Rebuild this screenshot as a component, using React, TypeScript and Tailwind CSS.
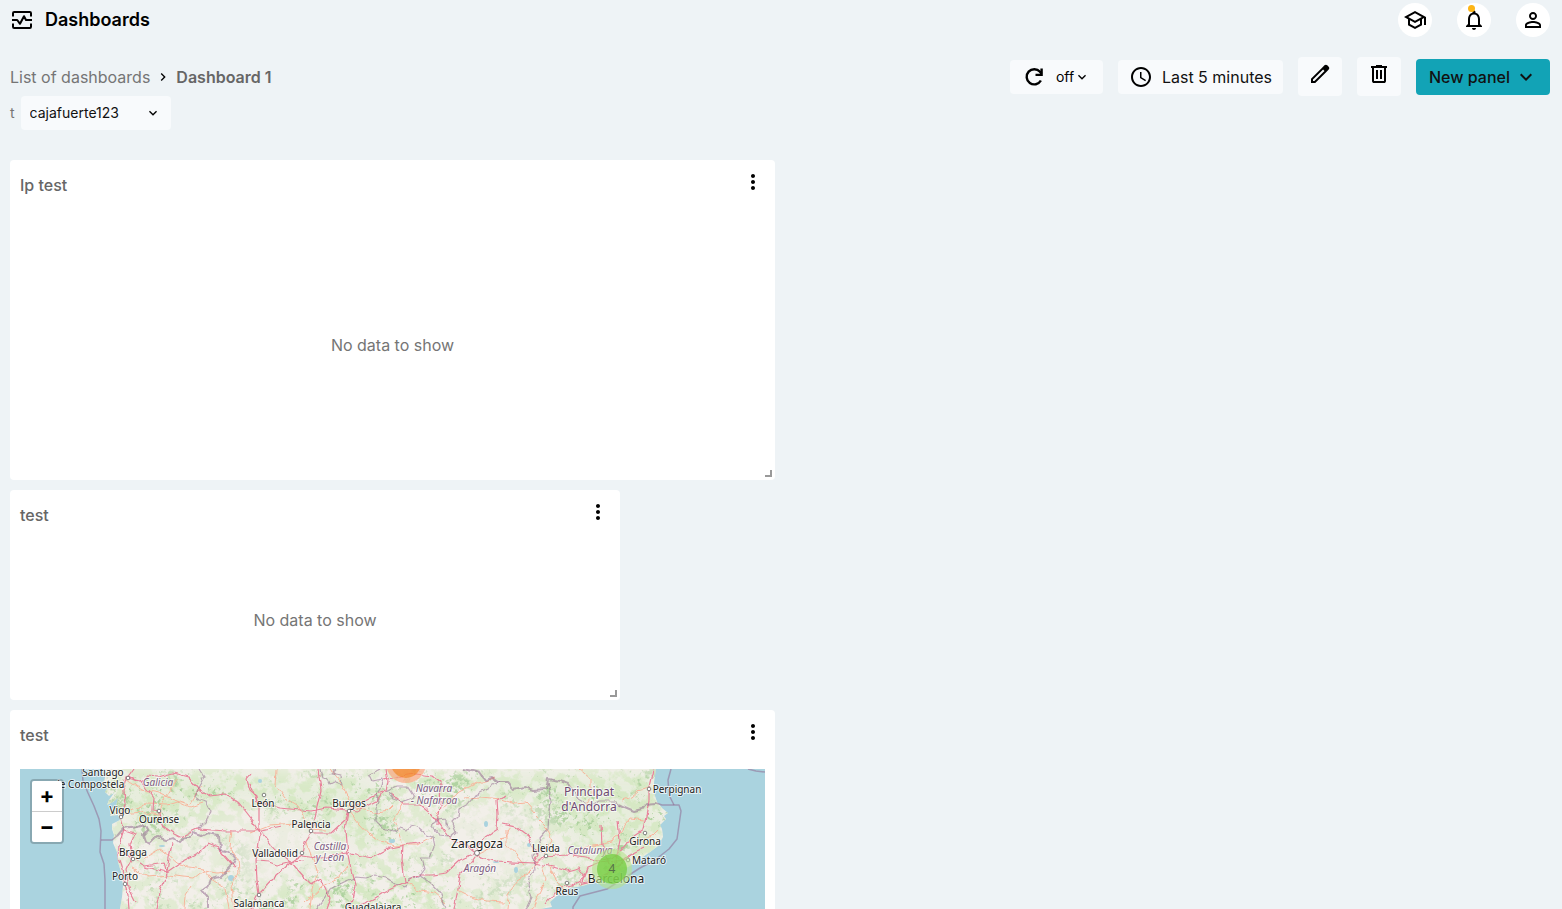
import React from "react";
import {
  MdChevronRight,
  MdKeyboardArrowDown,
  MdMoreVert,
  MdNotificationsNone,
  MdOutlineSchool,
  MdPersonOutline,
  MdSchedule,
} from "react-icons/md";

function ActivityIcon() {
  return (
    <svg className="size-6" viewBox="0 0 24 24" fill="none" stroke="currentColor" strokeWidth="2" aria-hidden="true">
      <path d="M3 8.500V5.200Q3 4 4.200 4H19.800Q21 4 21 5.200V8.500M3 15.500V18.800Q3 20 4.200 20H19.800Q21 20 21 18.800V15.500" />
      <path d="M2 12H7.200L10 15.800L14 8.200L16 12H22" strokeLinejoin="round" />
    </svg>
  );
}

function RefreshIcon() {
  return (
    <svg className="size-6" viewBox="0 0 24 24" fill="none" stroke="currentColor" strokeWidth="2.400" aria-hidden="true">
      <path d="M18.900 15.500A7.600 7.600 0 1 1 18 6.800L19.500 8.800" />
      <path d="M13.500 9.900H19.600V3.500" />
    </svg>
  );
}

function EditIcon() {
  return (
    <svg className="size-6" viewBox="0 0 24 24" fill="currentColor" aria-hidden="true">
      <path d="M5 19H6.400L16.500 8.900L15.100 7.500L5 17.600ZM15.050 4.725L16.450 3.325Q17.025 2.750 17.862 2.750T19.275 3.325L20.675 4.725Q21.250 5.300 21.275 6.112T20.725 7.500L17.850 10.400L7.250 21H3V16.750L13.600 6.150Z" fillRule="evenodd" />
    </svg>
  );
}

function TrashIcon() {
  return (
    <svg className="size-6" viewBox="0 0 24 24" fill="currentColor" aria-hidden="true">
      <path d="M7 21Q6.175 21 5.588 20.413T5 19V6H4V4H9V3H15V4H20V6H19V19Q19 19.825 18.413 20.413T17 21ZM17 6H7V19H17ZM9 17H11V8H9ZM13 17H15V8H13Z" />
    </svg>
  );
}

interface PanelProps {
  title: string;
  className: string;
  children: React.ReactNode;
}

function Panel({ title, className, children }: PanelProps) {
  return (
    <section className={"relative flex flex-col rounded bg-white p-2.5 " + className}>
      <div className="flex h-[49px] shrink-0 items-start justify-between">
        <h2 className="pt-[3px] text-base leading-6 font-medium text-[#666666]">{title}</h2>
        <button type="button" aria-label="Panel options" className="flex size-6 items-center justify-center text-black">
          <MdMoreVert className="size-6" />
        </button>
      </div>
      {children}
      <span className="absolute right-[3px] bottom-[3px] size-[7px] border-r-2 border-b-2 border-[#999999]" />
    </section>
  );
}

const majorRoads = [
  "M134 769L127 779L123 790L124 805L121 818L124 829L119 845L118 858L122 870L125 884L128 895L129 909",
  "M128 777L143 784L153 797L152 811L159 812L162 825L174 834L180 837L197 829L227 831L256 831L281 826",
  "M126 778L140 781L147 776L158 777L173 773L188 777L198 788L210 796L225 794L239 804L253 822L260 834L258 850L256 860L257 880L259 894",
  "M119 847L132 858L145 866L164 863L167 875L159 893L156 909",
  "M145 867L167 872L180 863L199 853L208 844L218 848L231 863L236 867",
  "M124 830L135 834L130 845L132 858L126 870L129 888L136 902",
  "M172 843L169 858L167 872",
  "M251 775L247 780L250 790L256 795L257 803L280 808L311 811L327 808L348 810L366 800L377 794L386 791L388 782L386 769",
  "M385 790L377 801L358 811L349 810L346 820L331 834L311 834L305 843L303 854L290 863L275 877L259 894L251 909",
  "M250 783L259 805L259 829L274 849L290 862L304 878L311 885L321 879L330 898L326 909",
  "M349 811L346 830L348 855L351 870L355 885L352 899L348 909",
  "M303 855L322 858L347 853L372 858L390 848L405 845L423 842",
  "M390 794L404 804L420 804L432 814L441 825L450 838L468 847L476 853L480 858L495 861L533 863L546 856L566 854L586 857L598 861L611 858L624 848L634 835L643 829L646 816L649 800L649 787L653 769",
  "M384 780L400 776L414 774L433 776L441 782L440 805L438 825",
  "M477 853L469 864L460 875L458 889L454 909",
  "M476 851L486 837L497 830L498 815L497 800L505 795",
  "M475 853L460 860L447 872L433 874L419 874L408 881L405 882L402 860L403 846",
  "M502 824L516 827L528 836L538 855L533 863L553 867L567 871L578 868L585 877L573 885L562 887L553 894L545 904",
  "M580 884L593 881L608 873L618 865L631 854L643 848",
  "M601 824L602 845L606 856L612 869",
  "M618 821L620 840L617 855L613 869",
  "M582 884L588 868L601 863L615 861L630 860",
  "M405 882L383 893L366 904L348 909",
  "M256 861L269 862L277 865L289 862L305 861",
  "M318 769L321 790L317 807L314 825L310 834",
];

const minorRoads = [
  "M127 780L142 790L160 793L177 801L190 807L202 803",
  "M130 810L147 804L168 805L181 801L190 804L198 790L202 785",
  "M124 814L142 812L158 815L164 801L176 780",
  "M131 868L148 877L169 875L183 877L194 878L203 871L218 873L230 871",
  "M144 858L160 849L169 855L177 862L189 867L203 869",
  "M191 885L185 895L184 909",
  "M202 869L211 879L225 888L229 909",
  "M250 833L270 825L293 823L310 829L325 830",
  "M277 769L276 786L286 799L298 806L308 825L311 834",
  "M350 812L359 824L370 836L381 842L394 846L404 845L417 845L432 837",
  "M393 805L387 811L377 813L360 809L343 804",
  "M404 803L395 818L397 828L401 840L404 847",
  "M330 769L341 782L348 798L353 810",
  "M437 813L459 792L477 783L496 778",
  "M465 798L481 797L501 799L515 804L526 803L536 814",
  "M506 829L506 844L516 855L524 865",
  "M538 860L528 874L517 881L508 895L507 909",
  "M458 890L474 898L488 901L503 902",
  "M306 842L312 857L317 870L312 890L310 909",
  "M351 862L338 878L322 887L305 903",
  "M536 817L547 828L552 841L544 852",
  "M573 857L583 847L599 844L611 841L619 835L630 818L644 820",
  "M627 843L641 839L652 835L658 829",
  "M542 866L546 879L539 894L532 909",
  "M550 867L555 880L565 890",
  "M579 769L591 779L591 796L585 806",
  "M649 788L640 790L632 797L623 800",
  "M231 830L229 846L238 859L239 873L231 887L234 909",
  "M407 882L419 891L434 893L446 903",
  "M476 855L493 847L503 838L511 827",
];

const regionBorders = [
  "M199 769L204 777L199 786L195 797L199 800L206 802L210 810L207 820L198 829",
  "M320 769L322 778L327 779L329 784L335 781L342 784L341 775L331 773L336 769",
  "M380 769L369 775L372 781L383 779L380 789L376 795L379 802L376 808L376 821L383 828L393 831L401 828L407 830L411 825L418 827L425 833L432 836L434 848L430 858L421 858L424 868L418 876L408 879L406 887L396 884L385 877L375 875L365 878L356 877L344 882L330 889L325 898L316 909",
  "M386 792L397 786L407 786L414 797L402 802L393 799L388 793",
  "M500 782L484 790L475 795L468 804L459 809L458 816L452 822L456 832L450 837L439 836L433 827L438 819L445 818L445 824L450 829",
  "M548 782L551 794L549 811L548 829L540 838L543 850L533 856L535 870L529 878L528 886L531 898L526 909",
  "M418 874L433 885L441 894L446 909",
  "M620 806L613 801L599 801L590 806L578 799L573 788",
];

const waterSpots = [
  [392, 841, 3, 2],
  [486, 824, 2, 3],
  [529, 845, 2, 2],
  [231, 878, 3, 3],
  [162, 846, 3, 1],
  [496, 862, 3, 1],
  [260, 781, 2, 2],
  [516, 870, 2, 3],
];

const towns: { name: string; x: number; y: number; dot: [number, number] | null }[] = [
  { name: "Santiago", x: 103, y: 776, dot: [128, 778] },
  { name: "de Compostela", x: 89, y: 788, dot: null },
  { name: "Vigo", x: 120, y: 814, dot: [121, 817] },
  { name: "Ourense", x: 159, y: 823, dot: [159, 811] },
  { name: "Braga", x: 133, y: 856, dot: [133, 859] },
  { name: "Porto", x: 125, y: 880, dot: [125, 884] },
  { name: "León", x: 263, y: 807, dot: [264, 795] },
  { name: "Burgos", x: 349, y: 807, dot: [349, 811] },
  { name: "Palencia", x: 311, y: 828, dot: [311, 831] },
  { name: "Valladolid", x: 275, y: 857, dot: [302, 853] },
  { name: "Salamanca", x: 259, y: 907, dot: [259, 895] },
  { name: "Guadalajara", x: 373, y: 911, dot: null },
  { name: "Lleida", x: 546, y: 852, dot: [546, 856] },
  { name: "Reus", x: 567, y: 895, dot: [567, 883] },
  { name: "Girona", x: 645, y: 845, dot: [645, 833] },
  { name: "Mataró", x: 649, y: 864, dot: [628, 860] },
  { name: "Perpignan", x: 677, y: 793, dot: [649, 789] },
];

const regions = [
  { name: "Galicia", x: 158, y: 786 },
  { name: "Navarra", x: 434, y: 792 },
  { name: "- Nafarroa", x: 434, y: 804 },
  { name: "Castilla", x: 330, y: 850 },
  { name: "y León", x: 330, y: 861 },
  { name: "Aragón", x: 480, y: 872 },
  { name: "Catalunya", x: 590, y: 854 },
];

const landPath =
  "M104 769L105 778L103 783L108 787L105 792L109 796L114 793L109 800L107 805L113 802L118 798L116 806L110 811L110 816L118 815L120 820L112 824L112 829L114 835L113 843L117 852L118 862L121 872L123 886L122 897L120 909V1020H540V909L552 907L550 902L559 894L570 888L582 886L597 882L611 877L625 869L637 861L650 852L658 846L663 837L662 829L660 825L666 819L664 816L668 813L662 808L657 802L654 793L654 782L656 769Z";

function SpainMap() {
  return (
    <svg
      className="block h-full w-full bg-[#aad3df] font-['Noto_Sans',sans-serif]"
      viewBox="20 769 745 251"
      preserveAspectRatio="xMinYMin slice"
      role="img"
      aria-label="Map of northern Spain"
    >
      <defs>
        <clipPath id="land">
          <path d={landPath} />
        </clipPath>
        <filter id="woods" x="0" y="0" width="100%" height="100%" colorInterpolationFilters="sRGB">
          <feTurbulence type="fractalNoise" baseFrequency="0.24" numOctaves="4" seed="7" result="fine" />
          <feTurbulence type="fractalNoise" baseFrequency="0.03" numOctaves="3" seed="12" result="broad" />
          <feComposite in="fine" in2="broad" operator="arithmetic" k1="0" k2="0.6" k3="0.6" k4="0" />
          <feColorMatrix values="0 0 0 0 0.68  0 0 0 0 0.82  0 0 0 0 0.62  10 0 0 0 -5.700" />
        </filter>
        <filter id="meadow" x="0" y="0" width="100%" height="100%" colorInterpolationFilters="sRGB">
          <feTurbulence type="fractalNoise" baseFrequency="0.09" numOctaves="4" seed="31" />
          <feColorMatrix values="0 0 0 0 0.84  0 0 0 0 0.91  0 0 0 0 0.77  0 7 0 0 -3.100" />
        </filter>
        <filter id="wander" x="0" y="0" width="100%" height="100%">
          <feTurbulence type="fractalNoise" baseFrequency="0.1" numOctaves="2" seed="4" />
          <feDisplacementMap in="SourceGraphic" scale="6" xChannelSelector="R" yChannelSelector="G" />
        </filter>
        <filter id="soft" x="-30%" y="-30%" width="160%" height="160%">
          <feGaussianBlur stdDeviation="9" />
        </filter>
        <mask id="forest">
          <g filter="url(#soft)">
            <rect x="20" y="769" width="745" height="251" fill="#999999" />
            <path fill="#ffffff" d="M110 769H240L300 780L370 775L400 840L360 850L330 820L250 800L190 810L160 835L120 820ZM380 769H655L665 850L600 870L570 840L550 800L480 790L430 810ZM230 909L330 875L430 870L450 909Z" />
            <path fill="#333333" d="M230 810L330 820L320 870L240 890ZM440 810L530 800L540 860L500 890L450 870ZM160 845L215 840L225 860L170 890Z" />
          </g>
        </mask>
      </defs>

      <path d={landPath} fill="#f2efe9" />
      <g clipPath="url(#land)">
        <g mask="url(#forest)">
          <path d="M110 769H240L300 780L370 775L400 840L360 850L330 820L250 800L190 810L160 835L120 820ZM470 769H655L665 850L600 870L570 840L550 800L480 790Z" fill="#dcebd0" fillOpacity="0.5" filter="url(#soft)" />
          <rect x="20" y="769" width="745" height="251" filter="url(#meadow)" />
          <rect x="20" y="769" width="745" height="251" filter="url(#woods)" />
        </g>
        {waterSpots.map(([x, y, rx, ry], i) => (
          <ellipse key={i} cx={x} cy={y} rx={rx} ry={ry} fill="#aad3df" />
        ))}
        <g filter="url(#wander)">
          <rect x="20" y="769" width="745" height="251" fill="none" />
          <g fill="none" stroke="#f8b59c" strokeWidth="1" strokeLinejoin="round">
            {minorRoads.map((d) => (
              <path key={d} d={d} />
            ))}
          </g>
          <g fill="none" stroke="#e8829a" strokeWidth="1.200" strokeLinejoin="round">
            {majorRoads.map((d) => (
              <path key={d} d={d} />
            ))}
          </g>
        </g>
      </g>

      <g fill="none" stroke="#8d618b" strokeOpacity="0.5" strokeLinejoin="round">
        <g strokeWidth="1.200" filter="url(#wander)">
          <rect x="20" y="769" width="745" height="251" stroke="none" />
          {regionBorders.map((d) => (
            <path key={d} d={d} />
          ))}
        </g>
        <g strokeWidth="1.500">
          <path d="M82 769L83 781L88 793L94 806L99 819L101 831L100 852L104 864L105 880V1020" />
          <path d="M101 840H112L117 836" />
          <path d="M656 803L662 805H679L681 811L677 839L669 849L655 860L640 868L626 877L607 889L580 896L573 907V1020" />
          <path d="M671 769L668 780L669 795L674 805M748 769L756 771L765 772" />
        </g>
        <g strokeWidth="2" filter="url(#wander)">
          <rect x="20" y="769" width="745" height="251" stroke="none" />
          <path d="M117 836L124 828L143 825L148 829L143 835L145 841L150 844L157 837L166 840L173 838L179 843L184 837L190 837L193 833L202 836L208 833L219 835L220 850L227 851L235 857L231 866L220 877L211 879L208 887L202 891L207 897V909" />
          <path d="M463 769L472 771L480 773L485 780L493 778L499 782L507 782L513 789L525 787L533 790L546 789L548 779L560 781L569 784L574 791" />
          <path d="M618 804L627 808L634 811L642 809L646 804L656 803" />
        </g>
      </g>

      <g textAnchor="middle" stroke="#ffffff" strokeOpacity="0.7" strokeWidth="2" strokeLinejoin="round" paintOrder="stroke">
        <g fontSize="10" fill="#222222">
          {towns.map((t) => (
            <text key={t.name} x={t.x} y={t.y}>
              {t.name}
            </text>
          ))}
        </g>
        <g fontSize="12" fill="#222222">
          <text x="477" y="848">Zaragoza</text>
          <text x="616" y="883">Barcelona</text>
        </g>
        <g fontSize="10" fontStyle="italic" fill="#7d5c82">
          {regions.map((r) => (
            <text key={r.name} x={r.x} y={r.y}>
              {r.name}
            </text>
          ))}
        </g>
        <g fontSize="12" fill="#6f4a72">
          <text x="589" y="796">Principat</text>
          <text x="589" y="811">d'Andorra</text>
        </g>
      </g>

      <g fill="#ffffff" stroke="#666666" strokeWidth="0.800">
        {towns.map((t) => t.dot && <circle key={t.name} cx={t.dot[0]} cy={t.dot[1]} r="1.800" />)}
        <circle cx="477" cy="853" r="2.500" />
      </g>

      <circle cx="406" cy="763" r="20" fill="#fd9c73" fillOpacity="0.6" />
      <circle cx="406" cy="763" r="15" fill="#f18017" fillOpacity="0.6" />
      <circle cx="612" cy="869" r="20" fill="#b5e28c" fillOpacity="0.6" />
      <circle cx="612" cy="869" r="15" fill="#6ecc39" fillOpacity="0.7" />
      <text x="612" y="873" textAnchor="middle" fontSize="12" fill="#55704a">
        4
      </text>
    </svg>
  );
}

const roundButton = "relative flex size-[34px] items-center justify-center rounded-full bg-white";

export default function App() {
  return (
    <div className="flex h-screen flex-col overflow-hidden bg-[#eef3f6] font-['Inter',sans-serif] text-base text-black">
      <header className="flex h-10 shrink-0 items-center justify-between pr-3 pl-2.5">
        <div className="flex items-center gap-[11px]">
          <ActivityIcon />
          <h1 className="text-lg leading-6 font-semibold">Dashboards</h1>
        </div>
        <div className="flex items-center gap-[25px]">
          <button type="button" aria-label="Learn" className={roundButton}>
            <MdOutlineSchool className="size-6" />
          </button>
          <button type="button" aria-label="Notifications" className={roundButton}>
            <MdNotificationsNone className="size-6" />
            <span className="absolute top-0.5 left-[11px] size-[7px] rounded-full bg-[#fdb515]" />
          </button>
          <button type="button" aria-label="Account" className={roundButton}>
            <MdPersonOutline className="size-6" />
          </button>
        </div>
      </header>

      <main className="flex flex-col pr-3 pl-2.5 pt-[17px]">
        <div className="flex items-center justify-between">
          <nav aria-label="Breadcrumb" className="flex items-center gap-[5px] text-[#666666]">
            <a href="#dashboards" className="text-[#757575]">
              List of dashboards
            </a>
            <MdChevronRight className="size-4 text-black" />
            <span className="font-semibold">Dashboard 1</span>
          </nav>

          <div className="flex items-center gap-[15px]">
            <div className="flex h-[34px] w-[93px] items-center rounded bg-[#f8fafc] pl-3">
              <button type="button" aria-label="Refresh">
                <RefreshIcon />
              </button>
              <div className="relative ml-2.5 flex items-center">
                <select aria-label="Refresh interval" className="w-9 appearance-none bg-transparent text-sm">
                  <option>off</option>
                </select>
                <MdKeyboardArrowDown className="pointer-events-none absolute right-0.5 size-4" />
              </div>
            </div>
            <button type="button" className="flex h-[34px] items-center gap-[9px] rounded bg-[#f8fafc] px-[11px] text-[#111111]">
              <MdSchedule className="size-6 text-black" />
              Last 5 minutes
            </button>
            <button type="button" aria-label="Edit dashboard" className="flex h-[39px] w-11 justify-center rounded bg-[#f8fafc] pt-[5px]">
              <EditIcon />
            </button>
            <button type="button" aria-label="Delete dashboard" className="flex h-[39px] w-11 justify-center rounded bg-[#f8fafc] pt-[5px]">
              <TrashIcon />
            </button>
            <button type="button" className="flex h-9 w-[134px] items-center gap-1 rounded bg-[#12a3b6] pl-[13px] font-medium text-[#111111]">
              New panel
              <MdKeyboardArrowDown className="size-6" />
            </button>
          </div>
        </div>

        <div className="flex items-center gap-1.5 text-sm">
          <label htmlFor="variable-t" className="text-[#757575]">
            t
          </label>
          <div className="relative flex items-center">
            <select id="variable-t" className="h-[34px] w-[150px] appearance-none rounded bg-[#f8fafc] pl-[9px] text-sm text-[#111111]">
              <option>cajafuerte123</option>
            </select>
            <MdKeyboardArrowDown className="pointer-events-none absolute right-2.5 size-4" />
          </div>
        </div>

        <div className="mt-[30px] grid auto-rows-[100px] grid-cols-10 gap-2.5">
          <Panel title="Ip test" className="col-span-5 row-span-3">
            <p className="flex grow items-center justify-center text-[#757575]">No data to show</p>
          </Panel>
          <Panel title="test" className="col-span-4 col-start-1 row-span-2">
            <p className="flex grow items-center justify-center text-[#757575]">No data to show</p>
          </Panel>
          <Panel title="test" className="col-span-5 col-start-1 row-span-3">
            <div className="relative min-h-0 grow overflow-hidden">
              <SpainMap />
              <div className="absolute top-2.5 left-2.5 flex flex-col rounded border-2 border-black/20 bg-clip-padding text-[22px] leading-[28px] font-bold">
                <button type="button" aria-label="Zoom in" className="flex h-[31px] w-[30px] justify-center rounded-t-xs border-b border-[#cccccc] bg-white">
                  +
                </button>
                <button type="button" aria-label="Zoom out" className="flex h-[30px] w-[30px] justify-center rounded-b-xs bg-white">
                  −
                </button>
              </div>
            </div>
          </Panel>
        </div>
      </main>
    </div>
  );
}
